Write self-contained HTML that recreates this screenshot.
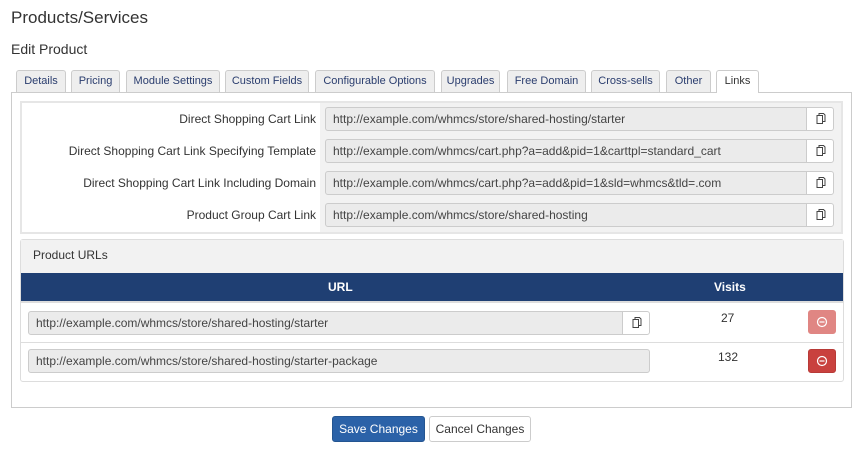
<!DOCTYPE html>
<html><head><style>
*{box-sizing:border-box;margin:0;padding:0}
body{width:862px;height:452px;background:#fff;font-family:"Liberation Sans",sans-serif;color:#333;position:relative;overflow:hidden}
.a{position:absolute}
.tab{position:absolute;top:70px;height:22px;border:1px solid #ccc;border-bottom:none;background:#eee;color:#2a3d6e;font-size:11px;text-align:center;line-height:21px;border-radius:3px 3px 0 0}
.tab.on{background:#fff;color:#333;height:23px}
.inp{position:absolute;height:24px;background:#ebebeb;border:1px solid #ccc;border-radius:3px;font-size:12px;line-height:22px;padding-left:7px;color:#444;white-space:nowrap;overflow:hidden}
.cp{position:absolute;width:28px;height:24px;background:#fff;border:1px solid #ccc;border-radius:0 3px 3px 0}
.lbl{position:absolute;right:546px;font-size:12px;color:#333;white-space:nowrap}
.btnr{position:absolute;width:28px;height:24px;border-radius:3px;left:808px}
</style></head><body>
<div class="a" style="left:11px;top:8px;font-size:17px">Products/Services</div>
<div class="a" style="left:11px;top:41px;font-size:14px">Edit Product</div>

<div class="a" style="left:11px;top:92px;width:841px;height:316px;border:1px solid #ccc"></div>
<div class="tab" style="left:16px;width:50px">Details</div>
<div class="tab" style="left:71px;width:49px">Pricing</div>
<div class="tab" style="left:126px;width:94px">Module Settings</div>
<div class="tab" style="left:225px;width:84px">Custom Fields</div>
<div class="tab" style="left:315px;width:120px">Configurable Options</div>
<div class="tab" style="left:441px;width:59px">Upgrades</div>
<div class="tab" style="left:507px;width:79px">Free Domain</div>
<div class="tab" style="left:591px;width:69px">Cross-sells</div>
<div class="tab" style="left:666px;width:45px">Other</div>
<div class="tab on" style="left:716px;width:43px">Links</div>

<div class="a" style="left:20px;top:101px;width:823px;height:133px;border:2px solid #e6e6e6;background:#fff"></div>
<div class="a" style="left:320px;top:103px;width:521px;height:129px;background:#f2f2f2"></div>
<svg width="0" height="0" style="position:absolute"><defs><g id="ci"><path d="M3 3.5h5.5v8H3z" fill="none" stroke="#444" stroke-width="1"/><path d="M5 3.5V1.5h4.5l1.5 1.5v6.5H8.5" fill="none" stroke="#444" stroke-width="1"/></g></defs></svg>

<div class="lbl" style="top:112px">Direct Shopping Cart Link</div>
<div class="inp" style="left:325px;top:107px;width:482px;border-radius:3px 0 0 3px">http://example.com/whmcs/store/shared-hosting/starter</div>
<div class="cp" style="left:806px;top:107px"><svg width="14" height="14" style="margin:4px 0 0 7px"><use href="#ci"/></svg></div>

<div class="lbl" style="top:144px">Direct Shopping Cart Link Specifying Template</div>
<div class="inp" style="left:325px;top:139px;width:482px;border-radius:3px 0 0 3px">http://example.com/whmcs/cart.php?a=add&amp;pid=1&amp;carttpl=standard_cart</div>
<div class="cp" style="left:806px;top:139px"><svg width="14" height="14" style="margin:4px 0 0 7px"><use href="#ci"/></svg></div>

<div class="lbl" style="top:176px">Direct Shopping Cart Link Including Domain</div>
<div class="inp" style="left:325px;top:171px;width:482px;border-radius:3px 0 0 3px">http://example.com/whmcs/cart.php?a=add&amp;pid=1&amp;sld=whmcs&amp;tld=.com</div>
<div class="cp" style="left:806px;top:171px"><svg width="14" height="14" style="margin:4px 0 0 7px"><use href="#ci"/></svg></div>

<div class="lbl" style="top:208px">Product Group Cart Link</div>
<div class="inp" style="left:325px;top:203px;width:482px;border-radius:3px 0 0 3px">http://example.com/whmcs/store/shared-hosting</div>
<div class="cp" style="left:806px;top:203px"><svg width="14" height="14" style="margin:4px 0 0 7px"><use href="#ci"/></svg></div>

<div class="a" style="left:20px;top:239px;width:824px;height:143px;border:1px solid #ddd;border-radius:3px;background:#fff"></div>
<div class="a" style="left:21px;top:240px;width:822px;height:33px;background:#f2f2f2"></div>
<div class="a" style="left:33px;top:248px;font-size:12px">Product URLs</div>
<div class="a" style="left:21px;top:273px;width:822px;height:28px;background:#1f3f73;color:#fff;font-weight:bold;font-size:12px">
<span class="a" style="left:307px;top:7px">URL</span><span class="a" style="left:693px;top:7px">Visits</span></div>
<div class="a" style="left:21px;top:301px;width:822px;height:2px;background:#ddd"></div>
<div class="inp" style="left:28px;top:311px;width:595px;border-radius:3px 0 0 3px">http://example.com/whmcs/store/shared-hosting/starter</div>
<div class="cp" style="left:622px;top:311px"><svg width="14" height="14" style="margin:4px 0 0 7px"><use href="#ci"/></svg></div>
<div class="a" style="left:721px;top:311px;font-size:12px">27</div>
<div class="btnr" style="top:310px;background:#e08683;border:1px solid #e08683"><svg width="26" height="22"><circle cx="13" cy="11" r="4.5" fill="none" stroke="#fff" stroke-width="1.2"/><path d="M10.5 11h5" stroke="#fff" stroke-width="1.2"/></svg></div>
<div class="a" style="left:21px;top:342px;width:822px;height:1px;background:#ddd"></div>
<div class="inp" style="left:28px;top:349px;width:622px">http://example.com/whmcs/store/shared-hosting/starter-package</div>
<div class="a" style="left:718px;top:350px;font-size:12px">132</div>
<div class="btnr" style="top:349px;background:#c9413e;border:1px solid #b83a37"><svg width="26" height="22"><circle cx="13" cy="11" r="4.5" fill="none" stroke="#fff" stroke-width="1.2"/><path d="M10.5 11h5" stroke="#fff" stroke-width="1.2"/></svg></div>

<div class="a" style="left:332px;top:416px;width:93px;height:26px;background:#2b62a8;border:1px solid #245591;border-radius:3px;color:#fff;font-size:12px;text-align:center;line-height:24px">Save Changes</div>
<div class="a" style="left:429px;top:416px;width:102px;height:26px;background:#fff;border:1px solid #ccc;border-radius:3px;color:#333;font-size:12px;text-align:center;line-height:24px">Cancel Changes</div>
</body></html>
